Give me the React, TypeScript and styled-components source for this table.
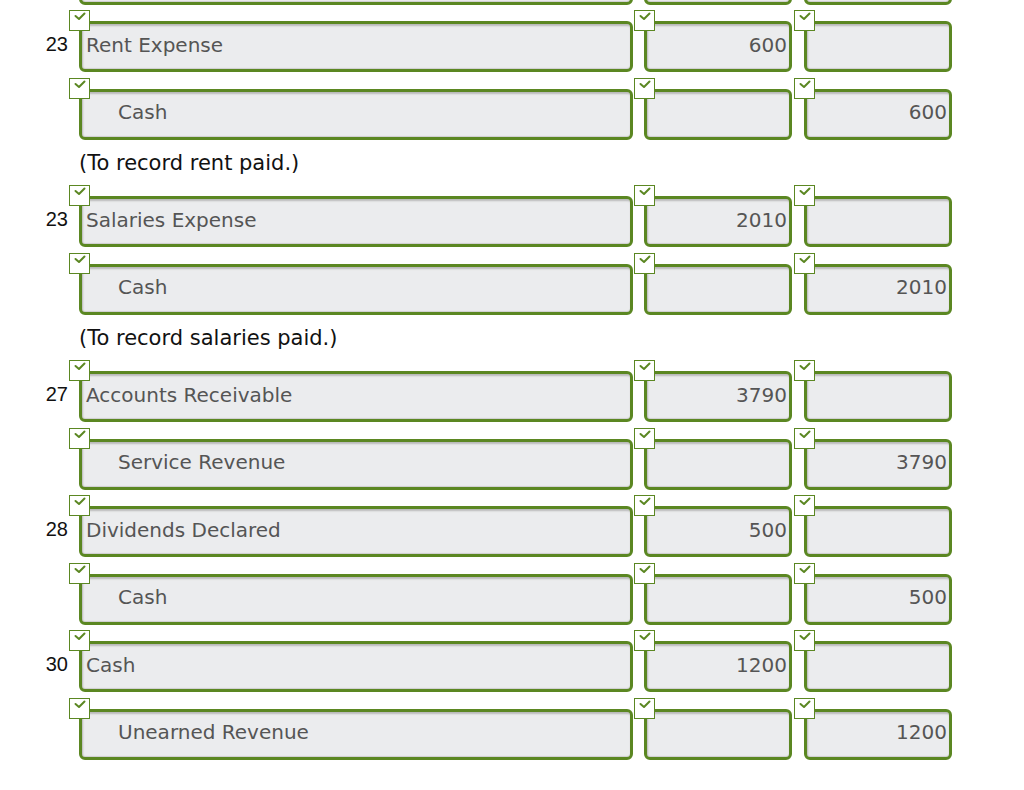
import React from "react";
import styled, { createGlobalStyle } from "styled-components";

const GREEN = "#5b8722";

const Global = createGlobalStyle`
  html, body { margin: 0; padding: 0; background: #ffffff; overflow: hidden; }
  body { font-family: "DejaVu Sans", Verdana, sans-serif; }
`;

const Page = styled.div`
  width: 1024px;
  height: 790px;
  overflow: hidden;
`;

const Journal = styled.div`
  display: flex;
  flex-direction: column;
  margin-top: -63px;
`;

const Row = styled.div`
  display: flex;
  align-items: center;
  padding-top: 16.5px;
  height: 51px;
  box-sizing: content-box;
`;

const DateCell = styled.div`
  width: 79px;
  padding-right: 11px;
  padding-bottom: 4px;
  box-sizing: border-box;
  text-align: right;
  font-family: "Liberation Sans", Arial, sans-serif;
  font-size: 20px;
  color: #111;
`;

const Field = styled.div<{ $w: number; $ml?: number }>`
  position: relative;
  width: ${(p) => p.$w}px;
  height: 51px;
  margin-left: ${(p) => p.$ml ?? 0}px;
  box-sizing: border-box;
  border: 3px solid ${GREEN};
  border-radius: 6px;
  background: #ebecee;
  box-shadow: inset 1px 2px 2px #b9b9b9, inset 0 -1px 1px #cfcfcf;
`;

const Value = styled.div<{ $align: "left" | "right"; $indent?: boolean }>`
  height: 100%;
  box-sizing: border-box;
  display: flex;
  align-items: center;
  justify-content: ${(p) => (p.$align === "right" ? "flex-end" : "flex-start")};
  padding-left: ${(p) => (p.$indent ? 36 : 4)}px;
  padding-right: 2px;
  padding-bottom: 4px;
  font-size: 20px;
  color: #555;
  white-space: nowrap;
`;

const Check = styled.div`
  position: absolute;
  left: -13px;
  top: -14px;
  width: 21px;
  height: 21px;
  box-sizing: border-box;
  background: #fff;
  border: 1.5px solid ${GREEN};
  display: flex;
  align-items: flex-start;
  justify-content: center;
  z-index: 2;
`;

const Note = styled.div`
  height: 40px;
  padding-top: 6px;
  box-sizing: border-box;
  line-height: 34px;
  margin-left: 79px;
  font-size: 21px;
  color: #111;
`;

const CheckMark = () => (
  <svg width="14" height="12" viewBox="0 0 14 12">
    <polyline
      points="2.5,5 6,8 11.5,2.5"
      fill="none"
      stroke={GREEN}
      strokeWidth="2"
      strokeLinecap="round"
      strokeLinejoin="round"
    />
  </svg>
);

type Entry = {
  date?: string;
  account: string;
  indent?: boolean;
  debit?: string;
  credit?: string;
  note?: string;
};

const entries: Entry[] = [
  { account: "", indent: true },
  { date: "23", account: "Rent Expense", debit: "600" },
  { account: "Cash", indent: true, credit: "600", note: "(To record rent paid.)" },
  { date: "23", account: "Salaries Expense", debit: "2010" },
  { account: "Cash", indent: true, credit: "2010", note: "(To record salaries paid.)" },
  { date: "27", account: "Accounts Receivable", debit: "3790" },
  { account: "Service Revenue", indent: true, credit: "3790" },
  { date: "28", account: "Dividends Declared", debit: "500" },
  { account: "Cash", indent: true, credit: "500" },
  { date: "30", account: "Cash", debit: "1200" },
  { account: "Unearned Revenue", indent: true, credit: "1200" },
];

const InputBox = ({
  w,
  ml,
  value,
  align,
  indent,
}: {
  w: number;
  ml?: number;
  value?: string;
  align: "left" | "right";
  indent?: boolean;
}) => (
  <Field $w={w} $ml={ml}>
    <Check>
      <CheckMark />
    </Check>
    <Value $align={align} $indent={indent}>
      {value}
    </Value>
  </Field>
);

export default function App() {
  return (
    <Page>
      <Global />
      <Journal>
        {entries.map((e, i) => (
          <React.Fragment key={i}>
            <Row>
              <DateCell>{e.date ?? ""}</DateCell>
              <InputBox w={554} value={e.account} align="left" indent={e.indent} />
              <InputBox w={148} ml={11} value={e.debit} align="right" />
              <InputBox w={148} ml={12} value={e.credit} align="right" />
            </Row>
            {e.note && <Note>{e.note}</Note>}
          </React.Fragment>
        ))}
      </Journal>
    </Page>
  );
}
